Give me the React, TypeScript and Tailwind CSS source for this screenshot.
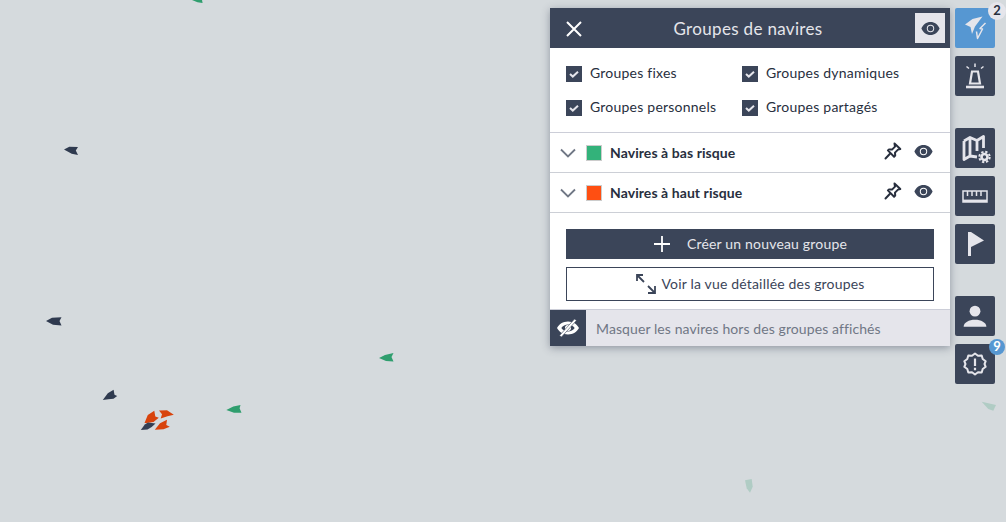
const ships = [
  { fill: '#2f3a4f', points: '64,149.5 69.3,146.7 78,147 75.8,150.500 78,155 71.7,153.8' },
  { fill: '#2f3a4f', points: '46,321 52,317.800 61.500,317.200 59.500,321 61.500,325.500 53,324.800' },
  { fill: '#2f3a4f', points: '102.800,400 107.800,393.300 113.600,389.800 114.500,394.800 117.200,396 113.500,398.800 108.300,399.200' },
  { fill: '#d8430c', points: '144.500,423 147.800,415 154.300,410.800 155.300,416.500 158.800,417.700 153.500,422 146.700,423' },
  { fill: '#d8430c', points: '159,410.500 167,410.300 173.800,414.700 167.500,416.300 160.700,418.500 162,414.300' },
  { fill: '#d8430c', points: '154.800,429.800 160,423.300 167,419.800 166.300,425 169.800,426.700 163.500,429.300' },
  { fill: '#343f54', points: '140.800,430 144.800,424.500 148,422.500 155.500,423.500 151.700,427 147.500,429.500' },
  { fill: '#2f9e6e', points: '226.300,410 233.300,406.500 240.500,405 239.600,408.300 241.500,412.800 234,412.800' },
  { fill: '#2f9e6e', points: '379,358 385,355 393.500,353 391.500,357 393.500,361.500 386,361' },
  { fill: '#2f9e6e', points: '192,0 202,0 202.600,3 197.500,2.300' },
  { fill: '#b0ccc4', points: '981.700,401.700 996,405 993.300,410.700 988.300,409' },
  { fill: '#b0ccc4', points: '745,480.300 751.700,479 752.700,486.700 750,492.700 746.700,488.300' },
]

function EyeIcon({ className }: { className?: string }) {
  return (
    <svg viewBox="0 0 20 14" className={className} fill="currentColor">
      <path fillRule="evenodd" d="M10 0C5.500 0 1.800 2.900 0.200 7 1.800 11.100 5.500 14 10 14s8.200-2.900 9.800-7C18.200 2.900 14.500 0 10 0zm0 3a4 4 0 1 1 0 8 4 4 0 0 1 0-8z" />
      <circle cx="10" cy="7" r="2.900" />
    </svg>
  )
}

function PinIcon() {
  return (
    <svg viewBox="0 0 18 18" className="h-[18px] w-[18px] text-[#282f3e]" fill="none" stroke="currentColor" strokeWidth="2" strokeLinejoin="round" strokeLinecap="round">
      <path d="M10.500 1.500l5.800 5.500-2.300.6-3 3 .2 3-1.100 1.100-6.200-6.300 1.100-1 3 .2 3-3z" />
      <path d="M6 11.800L1.500 16.500" />
    </svg>
  )
}

function Checkbox({ label }: { label: string }) {
  return (
    <label className="flex h-4 items-center gap-2">
      <span className="flex h-4 w-4 items-center justify-center bg-[#3b4559]">
        <svg viewBox="0 0 16 16" className="h-4 w-4" fill="none" stroke="#e5e5eb" strokeWidth="2">
          <path d="M4 8l2.800 2.600L12 5.800" />
        </svg>
      </span>
      <span className="mb-[3px] text-[14px] tracking-[0.22px] text-[#282f3e]">{label}</span>
    </label>
  )
}

function GroupRow({ color, label }: { color: string; label: string }) {
  return (
    <div className="flex h-10 items-center border-b border-[#cccfd6] pl-[10px] pr-[17px]">
      <svg viewBox="0 0 16 10" className="h-[10px] w-4 text-[#707785]" fill="none" stroke="currentColor" strokeWidth="1.800">
        <path d="M1 1.500l7 7 7-7" />
      </svg>
      <span className={`ml-[10px] h-4 w-4 border border-[#ccc] ${color}`} />
      <span className="ml-2 text-[14px] font-bold tracking-[0.07px] text-[#282f3e]">{label}</span>
      <span className="mb-[3px] ml-auto flex items-center gap-[12px] text-[#3b4559]">
        <PinIcon />
        <EyeIcon className="h-[13px] w-[19px]" />
      </span>
    </div>
  )
}

function SideButton({ children, active, badge }: { children: React.ReactNode; active?: boolean; badge?: React.ReactNode }) {
  return (
    <button className={`relative flex h-10 w-10 items-center justify-center rounded-[2px] text-[#e5e5eb] ${active ? 'bg-[#5697d2]' : 'bg-[#3b4559]'}`}>
      {children}
      {badge}
    </button>
  )
}

export default function App() {
  return (
    <div className="relative h-[522px] w-full overflow-hidden bg-[#d5dadd] font-['Lato',sans-serif]">
      <svg className="absolute inset-0 h-full w-full" viewBox="0 0 1006 522">
        {ships.map(ship => (
          <polygon key={ship.points} points={ship.points} fill={ship.fill} />
        ))}
      </svg>

      <div className="relative flex justify-end gap-[5px] pr-[11px] pt-2">
        <div className="h-[338px] w-[400px] bg-white shadow-[0_2px_8px_rgba(59,69,89,0.45)]">
          <div className="relative flex h-10 items-center justify-center bg-[#3b4559] pr-1 pt-px text-white">
            <svg viewBox="0 0 18 18" className="absolute left-[15px] h-[18px] w-[18px]" fill="none" stroke="#fff" strokeWidth="2">
              <path d="M2 2l14 14M16 2L2 16" />
            </svg>
            <span className="text-[17px] tracking-[0.33px] text-[#e5e5eb]">Groupes de navires</span>
            <button className="absolute right-[5px] top-[5px] flex h-[30px] w-[30px] items-center justify-center bg-[#e5e5eb] text-[#3b4559]">
              <EyeIcon className="h-[13px] w-[19px]" />
            </button>
          </div>

          <div className="grid h-[85px] grid-cols-[176px_1fr] content-start gap-y-[18px] border-b border-[#ccced8] pl-4 pt-[18px]">
            <Checkbox label="Groupes fixes" />
            <Checkbox label="Groupes dynamiques" />
            <Checkbox label="Groupes personnels" />
            <Checkbox label="Groupes partagés" />
          </div>

          <GroupRow color="bg-[#33b27a]" label="Navires à bas risque" />
          <GroupRow color="bg-[#ff4f12]" label="Navires à haut risque" />

          <div className="flex flex-col gap-2 px-4 pt-4">
            <button className="flex h-[30px] items-center justify-center gap-4 bg-[#3b4559] text-[14px] tracking-[0.18px] text-[#e5e5eb]">
              <svg viewBox="0 0 18 18" className="h-[18px] w-[18px]" fill="none" stroke="#fff" strokeWidth="1.800">
                <path d="M9 1v16M1 9h16" />
              </svg>
              <span className="mb-[2px]">Créer un nouveau groupe</span>
            </button>
            <button className="flex h-[34px] items-center justify-center gap-1 border border-[#3b4559] bg-white text-[14px] tracking-[0.18px] text-[#3b4559]">
              <svg viewBox="0 0 22 22" className="h-[22px] w-[22px]" fill="none" stroke="#3b4559" strokeWidth="1.800">
                <path d="M2 2l7 7M2 8V2h6M20 20l-7-7M20 13v7h-7" />
              </svg>
              <span className="mb-[2px]">Voir la vue détaillée des groupes</span>
            </button>
          </div>

          <div className="mt-2 flex h-[37px] border-t border-[#ccced8] bg-[#e5e5eb]">
            <div className="flex w-9 items-center justify-center bg-[#3b4559] text-white">
              <svg viewBox="0 0 24 20" className="h-[20px] w-[24px]" fill="currentColor">
                <path fillRule="evenodd" d="M12 3.500C7 3.500 2.900 6.300 1 10 2.900 13.700 7 16.500 12 16.500s9.100-2.800 11-6.500C21.100 6.300 17 3.500 12 3.500zm0 3c2.700 0 5.200 1.300 6.700 3.500-1.500 2.200-4 3.500-6.700 3.500s-5.200-1.300-6.700-3.500C6.800 7.800 9.300 6.500 12 6.500zM12 7a3 3 0 1 0 0 6 3 3 0 0 0 0-6z" />
                <path d="M18.500 1l2 1.500L5.500 19l-2-1.500z" stroke="#3b4559" strokeWidth="0.600" />
              </svg>
            </div>
            <span className="flex items-center pl-[10px] text-[14px] tracking-[0.09px] text-[#707785]">
              Masquer les navires hors des groupes affichés
            </span>
          </div>
        </div>

        <div className="flex w-10 flex-col">
          <SideButton
            active
            badge={
              <span className="absolute -right-[11px] -top-[6px] flex h-[18px] w-[18px] items-center justify-center rounded-full bg-[#e5e5eb] text-[13px] font-bold text-[#282f3e]">
                2
              </span>
            }
          >
            <svg viewBox="0 0 24 24" className="h-6 w-6" fill="currentColor">
              <path d="M19.500 0.500L9.500 3 2 8.500l5.500 2.500 1.500 7 3-7.500z" />
              <path d="M22.500 7L17 12.500l2.500.5-5 9.500-1-7" fill="none" stroke="currentColor" strokeWidth="1.500" strokeLinejoin="round" />
            </svg>
          </SideButton>
          <div className="mt-2">
            <SideButton>
              <svg viewBox="0 0 24 28" className="h-7 w-6" fill="none" stroke="currentColor" strokeWidth="1.500">
                <path d="M7 21.500l2-12h6l2 12z" strokeWidth="2.200" />
                <path d="M3 25h18" strokeWidth="2.600" />
                <path d="M12 1.500v3.500M3.500 4.500l2.500 2M20.500 4.500L18 6.500" />
              </svg>
            </SideButton>
          </div>
          <div className="mt-8">
            <SideButton>
              <svg viewBox="0 0 32 32" className="h-8 w-8" fill="none" stroke="currentColor" strokeWidth="2.800" strokeLinejoin="round">
                <path d="M5 9l6-3.500 7 3 6.500-4v11.500M11 5.500V24l-6 3.500V9M18 8.500V19M11 24l7 1" />
                <circle cx="25.500" cy="25" r="7" fill="#3b4559" stroke="none" />
                <circle cx="25.500" cy="25" r="3" strokeWidth="2.600" />
                <circle cx="25.500" cy="25" r="5.200" strokeWidth="2" strokeDasharray="2.300 1.800" />
              </svg>
            </SideButton>
          </div>
          <div className="mt-2">
            <SideButton>
              <svg viewBox="0 0 26 13" className="h-[13px] w-[26px]" fill="none" stroke="currentColor" strokeWidth="1.500">
                <path d="M1 1h24v11H1z" />
                <path d="M1 10.800h24" strokeWidth="2.400" />
                <path d="M5.500 1v5M10 1v5M14.500 1v5M19 1v5" />
              </svg>
            </SideButton>
          </div>
          <div className="mt-2">
            <SideButton>
              <svg viewBox="0 0 16 24" className="ml-px h-6 w-4" fill="currentColor">
                <path d="M0 0h3v24H0zM3 0l13 8.500L3 15z" />
              </svg>
            </SideButton>
          </div>
          <div className="mt-8">
            <SideButton>
              <svg viewBox="0 0 24 24" className="h-[26px] w-[26px]" fill="currentColor">
                <circle cx="12" cy="7.500" r="5" />
                <path d="M1.500 22c0-4 5-6.500 10.500-6.500S22.500 18 22.500 22z" />
              </svg>
            </SideButton>
          </div>
          <div className="mt-2">
            <SideButton
              badge={
                <span className="absolute -right-[10px] -top-[5px] flex h-4 w-4 items-center justify-center rounded-full bg-[#5697d2] text-[13px] font-bold text-white">
                  9
                </span>
              }
            >
              <svg viewBox="0 0 24 24" className="h-6 w-6" fill="none" stroke="currentColor" strokeWidth="2" strokeLinejoin="round">
                <path d="M12 1.500l3 2.200 3.700-.2 1 3.500 3 2.200-1.200 2.800 1.200 2.800-3 2.200-1 3.500-3.700-.2-3 2.200-3-2.200-3.700.2-1-3.500-3-2.200 1.200-2.800-1.200-2.800 3-2.200 1-3.500 3.700.2z" />
                <path d="M12 6.500v7.500M12 15.800v2.400" strokeWidth="2.200" />
              </svg>
            </SideButton>
          </div>
        </div>
      </div>
    </div>
  )
}
